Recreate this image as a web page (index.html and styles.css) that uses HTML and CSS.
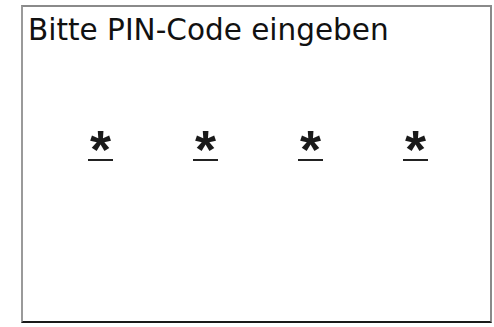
FILE: index.html
```html
<!DOCTYPE html>
<html lang="de">
<head>
<meta charset="utf-8">
<title>PIN-Code</title>
<link rel="stylesheet" href="styles.css">
</head>
<body>
<div class="screen">
  <div class="panel">
    <div class="title">Bitte PIN-Code eingeben</div>
    <div class="pins">
      <span class="pin">*</span>
      <span class="pin">*</span>
      <span class="pin">*</span>
      <span class="pin">*</span>
    </div>
  </div>
</div>
</body>
</html>
```
FILE: styles.css
```css
html, body {
  margin: 0;
  padding: 0;
  background: #ffffff;
}
.screen {
  width: 494px;
  height: 327px;
  overflow: hidden;
  padding-top: 5px;
  box-sizing: border-box;
  font-family: "DejaVu Sans", "Noto Sans", sans-serif;
  color: #111;
}
.panel {
  margin-left: 21px;
  width: 467px;
  height: 314px;
  border: 2px solid #8a8a8a;
  border-bottom-color: #1a1a1a;
  border-left-color: #9a9a9a;
  background: #fff;
}
.title {
  font-size: 29.5px;
  line-height: 34px;
  padding-left: 5px;
  padding-top: 6px;
}
.pins {
  display: flex;
  padding-left: 65px;
  gap: 80px;
  margin-top: 86px;
}
.pin {
  width: 25px;
  height: 26px;
  font-family: "Liberation Sans", Arial, sans-serif;
  font-size: 54px;
  font-weight: 700;
  line-height: 32px;
  text-align: center;
  border-bottom: 2px solid #222;
  color: #1a1a1a;
}
```
